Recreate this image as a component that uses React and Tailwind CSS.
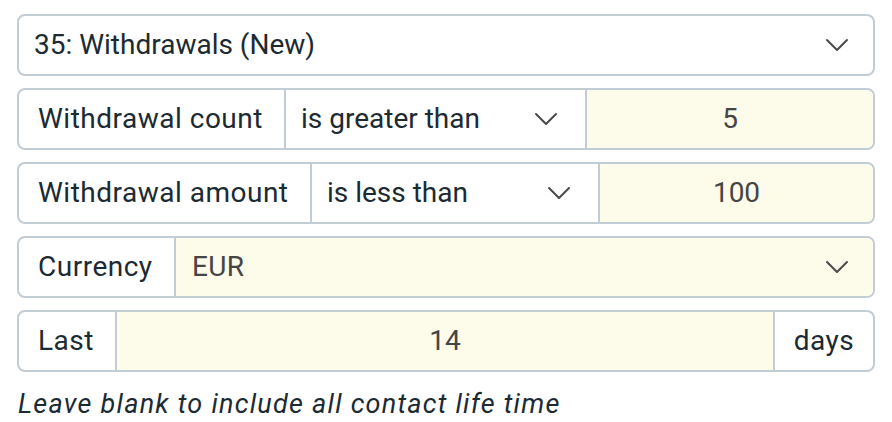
const font = { fontFamily: 'Roboto, "Liberation Sans", sans-serif' };

function Chevron() {
  return (
    <svg width="24" height="14" viewBox="0 0 24 14" fill="none" stroke="#4a4a4a" strokeWidth="2" strokeLinecap="round" strokeLinejoin="round">
      <path d="M2 2l10 10 10-10" />
    </svg>
  );
}

function Row({ children }) {
  return (
    <div className="flex h-[62px] w-full overflow-hidden rounded-lg border-2 border-[#c2ccd4] bg-white">
      {children}
    </div>
  );
}

function Label({ w, children }) {
  return (
    <div className={`flex shrink-0 items-center pl-[19px] text-[28px] tracking-[0.5px] text-[#1b2a33] ${w}`}>{children}</div>
  );
}

export default function App() {
  return (
    <div className="flex w-[892px] flex-col gap-3 bg-white px-[17px] pt-[14px]" style={font}>
      <div className="flex h-[62px] w-full items-center justify-between rounded-lg border-2 border-[#c2ccd4] bg-white pl-[15px] pr-[24px] text-[28px] text-[#1b2a33]">
        <span>35: Withdrawals (New)</span>
        <Chevron />
      </div>

      <Row>
        <Label w="w-[265px]">Withdrawal count</Label>
        <div className="flex w-[301px] shrink-0 items-center justify-between border-l-2 border-[#c2ccd4] pl-[15px] pr-[27px] text-[28px] text-[#1b2a33]">
          <span>is greater than</span>
          <Chevron />
        </div>
        <div className="flex flex-1 items-center justify-center border-l-2 border-[#c2ccd4] bg-[#fdfbe9] text-[28px] text-[#454545]">5</div>
      </Row>

      <Row>
        <Label w="w-[291px]">Withdrawal amount</Label>
        <div className="flex w-[288px] shrink-0 items-center justify-between border-l-2 border-[#c2ccd4] pl-[15px] pr-[27px] text-[28px] text-[#1b2a33]">
          <span>is less than</span>
          <Chevron />
        </div>
        <div className="flex flex-1 items-center justify-center border-l-2 border-[#c2ccd4] bg-[#fdfbe9] text-[28px] text-[#454545]">100</div>
      </Row>

      <Row>
        <Label w="w-[155px]">Currency</Label>
        <div className="flex flex-1 items-center justify-between border-l-2 border-[#c2ccd4] bg-[#fdfbe9] pl-[16px] pr-[24px] text-[28px] tracking-[0.3px] text-[#454545]">
          <span>EUR</span>
          <Chevron />
        </div>
      </Row>

      <Row>
        <Label w="w-[96px]">Last</Label>
        <div className="flex flex-1 items-center justify-center border-l-2 border-[#c2ccd4] bg-[#fdfbe9] text-[28px] text-[#454545]">14</div>
        <div className="flex w-[100px] shrink-0 items-center justify-center border-l-2 border-[#c2ccd4] text-[28px] tracking-[0.5px] text-[#1b2a33]">days</div>
      </Row>

      <p className="pl-px text-[27px] leading-[40px] italic tracking-[1.25px] text-[#1b2a33]">Leave blank to include all contact life time</p>
    </div>
  );
}
